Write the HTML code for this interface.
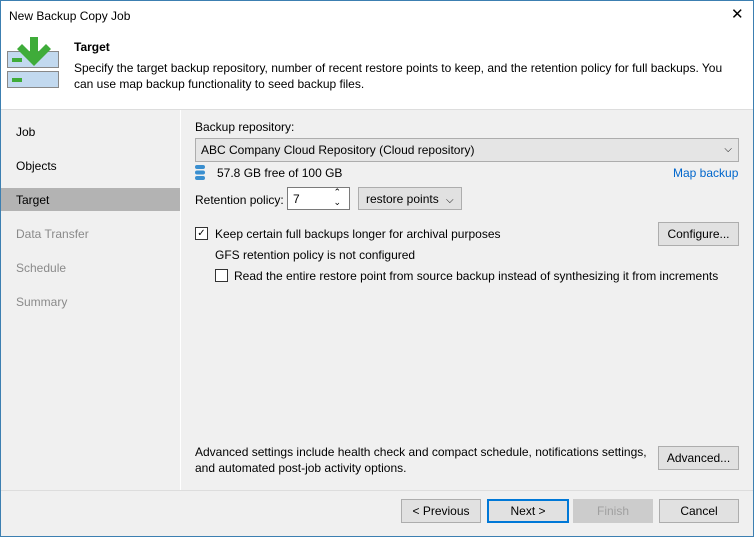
<!DOCTYPE html><html><head><style>
body{margin:0;width:754px;height:537px;font-family:"Liberation Sans",sans-serif;font-size:12px;color:#000;overflow:hidden;position:relative;background:#f0f0f0}
.a{position:absolute}
.btn{position:absolute;height:22px;border:1px solid #adadad;background:#e1e1e1;text-align:center;line-height:22px;font-size:12px}
</style></head><body>
<div class="a" style="left:0;top:0;width:752px;height:535px;border:1px solid #3c7fb1;"></div>
<div class="a" style="left:1px;top:1px;width:752px;height:108px;background:#fff"></div>
<div class="a" style="left:9px;top:9px;font-size:12px">New Backup Copy Job</div>
<div class="a" style="left:731px;top:5px;font-size:15px">✕</div>
<svg class="a" style="left:6px;top:36px" width="56" height="54">
<rect x="1.5" y="15.5" width="51" height="16" fill="#c2d9ef" stroke="#888"/>
<rect x="1.5" y="35.5" width="51" height="16" fill="#c2d9ef" stroke="#888"/>
<rect x="6" y="22" width="10" height="4" fill="#3fac3a"/><rect x="6" y="42" width="10" height="4" fill="#3fac3a"/>
<path d="M24 1h8v15l8-8 5 5-17 17-17-17 5-5 8 8z" fill="#3fac3a"/></svg>
<div class="a" style="left:74px;top:40px;font-weight:bold">Target</div>
<div class="a" style="left:74px;top:60px;width:670px;line-height:16px">Specify the target backup repository, number of recent restore points to keep, and the retention policy for full backups. You can use map backup functionality to seed backup files.</div>
<div class="a" style="left:1px;top:109px;width:752px;height:1px;background:#ddd"></div>
<div class="a" style="left:180px;top:110px;width:1px;height:380px;background:#fff"></div>
<div class="a" style="left:1px;top:188px;width:179px;height:23px;background:#b3b3b3"></div>
<div class="a" style="left:16px;top:125px">Job</div>
<div class="a" style="left:16px;top:159px">Objects</div>
<div class="a" style="left:16px;top:193px">Target</div>
<div class="a" style="left:16px;top:227px;color:#8a8a8a">Data Transfer</div>
<div class="a" style="left:16px;top:261px;color:#8a8a8a">Schedule</div>
<div class="a" style="left:16px;top:295px;color:#8a8a8a">Summary</div>
<div class="a" style="left:195px;top:120px">Backup repository:</div>
<div class="a" style="left:195px;top:138px;width:542px;height:22px;border:1px solid #adadad;background:#e5e5e5;line-height:22px;padding-left:5px;box-sizing:content-box;width:537px">ABC Company Cloud Repository (Cloud repository)<span style="position:absolute;right:6px;font-size:10px">⌵</span></div>
<svg class="a" style="left:195px;top:165px" width="10" height="16"><rect x="0" y="0" width="10" height="4" rx="2" fill="#3a8fd0"/><rect x="0" y="5.5" width="10" height="4" rx="2" fill="#3a8fd0"/><rect x="0" y="11" width="10" height="4" rx="2" fill="#3a8fd0"/></svg>
<div class="a" style="left:217px;top:166px">57.8 GB free of 100 GB</div>
<div class="a" style="left:673px;top:166px;color:#0066cc">Map backup</div>
<div class="a" style="left:195px;top:193px">Retention policy:</div>
<div class="a" style="left:287px;top:187px;width:63px;height:23px;border:1px solid #7a7a7a;background:#fff;line-height:23px;padding-left:5px;box-sizing:border-box">7<span style="position:absolute;right:8px;top:-1px;font-size:9px;line-height:10px">⌃<br>⌄</span></div>
<div class="a" style="left:358px;top:187px;width:104px;height:23px;border:1px solid #adadad;background:#e1e1e1;line-height:23px;padding-left:7px;box-sizing:border-box">restore points <span style="font-size:10px;margin-left:4px">⌵</span></div>
<div class="a" style="left:195px;top:227px;width:11px;height:11px;border:1px solid #333;background:#fff;font-size:10px;line-height:11px;text-align:center">✓</div>
<div class="a" style="left:215px;top:227px">Keep certain full backups longer for archival purposes</div>
<div class="btn" style="left:658px;top:222px;width:79px">Configure...</div>
<div class="a" style="left:215px;top:248px">GFS retention policy is not configured</div>
<div class="a" style="left:215px;top:269px;width:11px;height:11px;border:1px solid #333;background:#fff"></div>
<div class="a" style="left:234px;top:269px">Read the entire restore point from source backup instead of synthesizing it from increments</div>
<div class="a" style="left:195px;top:444px;line-height:16px">Advanced settings include health check and compact schedule, notifications settings,<br>and automated post-job activity options.</div>
<div class="btn" style="left:658px;top:446px;width:79px">Advanced...</div>
<div class="a" style="left:1px;top:490px;width:752px;height:1px;background:#ddd"></div>
<div class="btn" style="left:401px;top:499px;width:78px">&lt; Previous</div>
<div class="btn" style="left:487px;top:499px;width:78px;border:2px solid #0078d7;height:20px;line-height:20px">Next &gt;</div>
<div class="btn" style="left:573px;top:499px;width:78px;color:#a0a0a0;border-color:#ccc;background:#ccc">Finish</div>
<div class="btn" style="left:659px;top:499px;width:78px">Cancel</div>
</body></html>
